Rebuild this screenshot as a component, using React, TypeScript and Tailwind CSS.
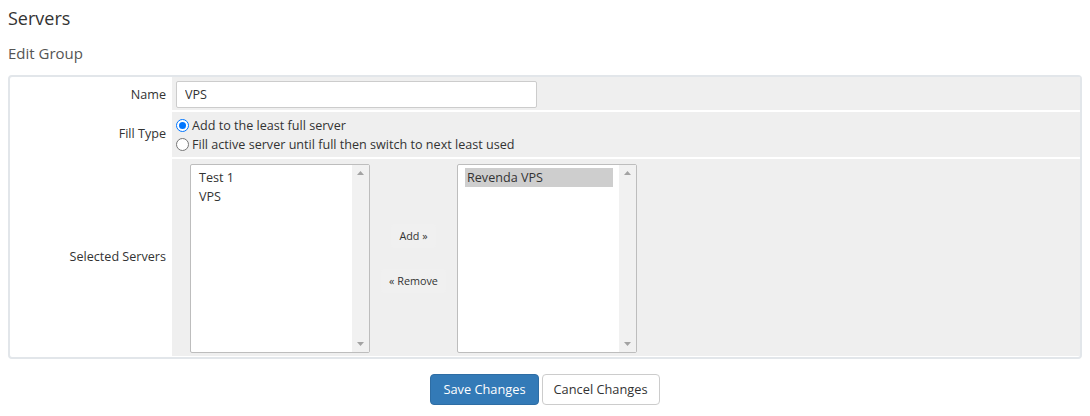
import React from 'react';

const font = { fontFamily: '"Open Sans", "Noto Sans", sans-serif' };

// fake listbox with a classic scrollbar drawn in
const ListBox: React.FC<{ items: string[]; selected?: string }> = ({ items, selected }) => (
    <div className="flex w-[180px] h-[189px] bg-white border border-[#bdbdbd] rounded-[2px]">
        <div className="flex-1 pt-[3px] pl-[8px] pr-[6px] text-[12.6px] leading-[19px] text-[#333]">
            {items.map((it) => (
                <div key={it} className={it === selected ? 'bg-[#cecece] -ml-[1px] pl-[2px]' : ''}>
                    {it}
                </div>
            ))}
        </div>
        <div className="w-[17px] bg-[#f1f1f1] flex flex-col justify-between items-center py-[6px]">
            <svg width="7" height="4" viewBox="0 0 7 4"><path d="M3.5 0L7 4H0z" fill="#a3a3a3" /></svg>
            <svg width="7" height="4" viewBox="0 0 7 4"><path d="M0 0h7L3.5 4z" fill="#a3a3a3" /></svg>
        </div>
    </div>
);

const Radio: React.FC<{ checked?: boolean }> = ({ checked }) => (
    <span className={`inline-flex items-center justify-center w-[13px] h-[13px] rounded-full border ${checked ? 'border-[#0075ff]' : 'border-[#767676]'} bg-white mr-[3px]`}>
        {checked && <span className="w-[7px] h-[7px] rounded-full bg-[#0075ff]" />}
    </span>
);

export default function App() {
    return (
        <div className="min-h-screen bg-white text-[#333] px-[8px]" style={font}>
            {/* Page heading */}
            <h1 className="text-[18px] leading-[24px] text-[#333] pt-[6px]">Servers</h1>
            <h2 className="text-[15px] leading-[20px] text-[#555] mt-[13px]">Edit Group</h2>

            {/* Form table */}
            <div className="mt-[12px] border-2 border-[#e2e6ea] rounded-[4px] bg-white flex flex-col gap-[2px] pb-[1px]">
                <div className="flex h-[33px]">
                    <div className="w-[162px] flex items-center justify-end pr-[6px] pt-[3px] text-[12.6px]">Name</div>
                    <div className="flex-1 bg-[#efefef] flex items-center pl-[4px] pt-[2px]">
                        <input
                            defaultValue="VPS"
                            className="w-[361px] h-[27px] bg-white border border-[#ccc] rounded-[2px] px-[8px] text-[12.6px] text-[#333] outline-none"
                            style={font}
                        />
                    </div>
                </div>

                <div className="flex h-[45px]">
                    <div className="w-[162px] flex items-center justify-end pr-[6px] text-[12.6px]">Fill Type</div>
                    <div className="flex-1 bg-[#efefef] flex flex-col justify-center pl-[4px] text-[12.6px] leading-[19px]">
                        <label className="flex items-center"><Radio checked />Add to the least full server</label>
                        <label className="flex items-center"><Radio />Fill active server until full then switch to next least used</label>
                    </div>
                </div>

                <div className="flex h-[197px]">
                    <div className="w-[162px] flex items-center justify-end pr-[6px] text-[12.6px]">Selected Servers</div>
                    <div className="flex-1 bg-[#efefef] flex items-start pl-[18px] pt-[5px]">
                        <ListBox items={['Test 1', 'VPS']} />
                        <div className="w-[87px] h-[188px] flex flex-col items-center pt-[60px] gap-[21px] text-[10.8px]">
                            <button className="px-[8px] py-[4px] rounded-[3px] bg-[#f0f0f0] text-[#333]">Add »</button>
                            <button className="px-[8px] py-[4px] rounded-[3px] bg-[#f0f0f0] text-[#333]">« Remove</button>
                        </div>
                        <ListBox items={['Revenda VPS']} selected="Revenda VPS" />
                    </div>
                </div>
            </div>

            {/* Actions */}
            <div className="flex justify-center gap-[3px] mt-[15px]">
                <button className="h-[31px] px-[12px] text-[12.8px] text-white bg-[#337ab7] border border-[#2e6da4] rounded-[4px]">Save Changes</button>
                <button className="h-[31px] px-[11px] text-[12.8px] text-[#333] bg-white border border-[#ccc] rounded-[4px]">Cancel Changes</button>
            </div>
        </div>
    );
}
